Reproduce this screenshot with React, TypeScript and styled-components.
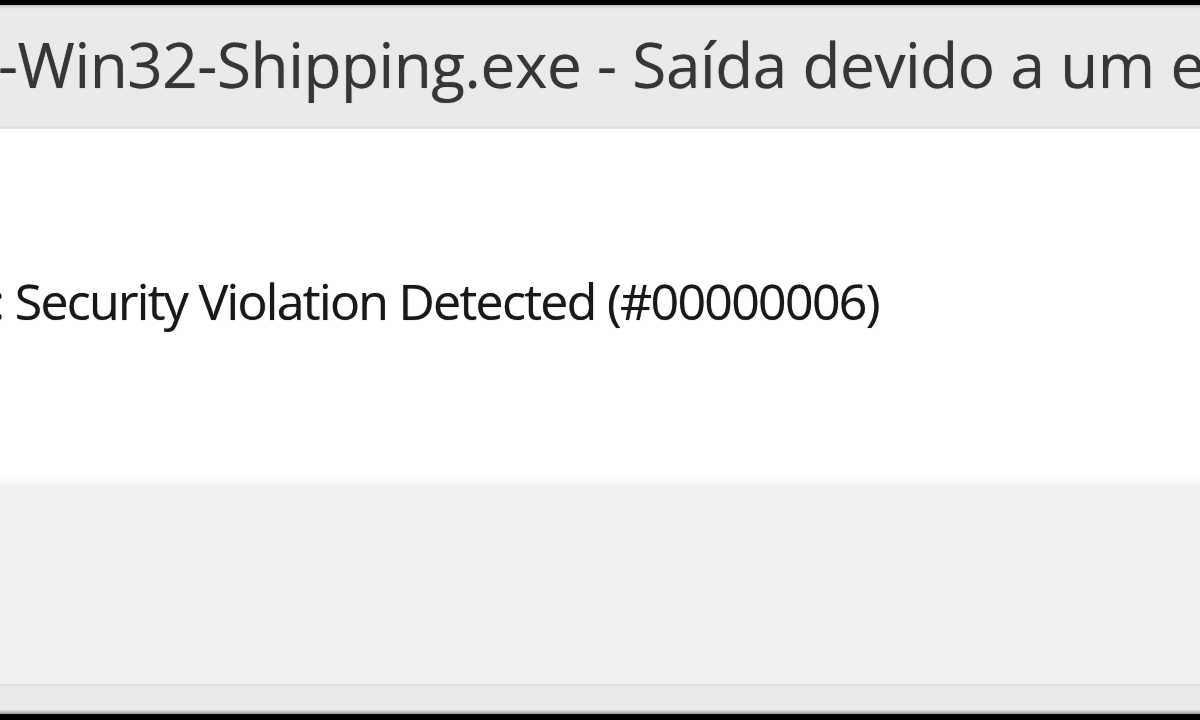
import React from "react";
import styled, { createGlobalStyle } from "styled-components";

const Global = createGlobalStyle`
  html, body { margin: 0; padding: 0; background: #000; }
  body { width: 1200px; height: 720px; overflow: hidden; }
`;

const Window = styled.div`
  width: 1200px;
  height: 720px;
  box-sizing: border-box;
  display: flex;
  flex-direction: column;
  background: #000;
  padding-top: 5px;
  padding-bottom: 6px;
  overflow: hidden;
  font-family: "Open Sans", "Noto Sans", sans-serif;
`;

const TitleBar = styled.div`
  height: 124px;
  flex: none;
  box-sizing: border-box;
  background: linear-gradient(#bdbdbd 0px, #e6e6e6 3px, #eaeaea 6px, #eaeaea 100%);
  border-bottom: 3px solid #e2e2e2;
  display: flex;
  align-items: center;
  overflow: hidden;
  white-space: nowrap;
`;

const Title = styled.span`
  font-size: 62px;
  color: #363636;
  margin-left: -2px;
  margin-top: -4px;
  letter-spacing: -0.4px;
  text-shadow: 0 0 1px rgba(40, 40, 40, 0.6);
`;

const Content = styled.div`
  height: 350px;
  flex: none;
  background: #ffffff;
  display: flex;
  align-items: center;
  overflow: hidden;
  white-space: nowrap;
`;

const Message = styled.span`
  font-size: 50px;
  color: #181818;
  margin-left: -8px;
  margin-top: -6px;
  letter-spacing: -1.7px;
  text-shadow: 0 0 1px rgba(20, 20, 20, 0.6);
`;

const Footer = styled.div`
  flex: 1;
  display: flex;
  flex-direction: column;
  background: linear-gradient(#fbfbfb 0px, #f0f0f0 9px, #f0f0f0 100%);
`;

const FooterBody = styled.div`
  flex: 1;
`;

const BottomStrip = styled.div`
  height: 30px;
  flex: none;
  box-sizing: border-box;
  border-top: 2px solid #e2e2e2;
  background: linear-gradient(#e9e9e9, #e9e9e9 85%, #9a9a9a 100%);
`;

export default function App() {
  return (
    <>
      <Global />
      <Window>
        <TitleBar>
          <Title>-Win32-Shipping.exe - Saída devido a um erro</Title>
        </TitleBar>
        <Content>
          <Message>: Security Violation Detected (#00000006)</Message>
        </Content>
        <Footer>
          <FooterBody />
          <BottomStrip />
        </Footer>
      </Window>
    </>
  );
}
